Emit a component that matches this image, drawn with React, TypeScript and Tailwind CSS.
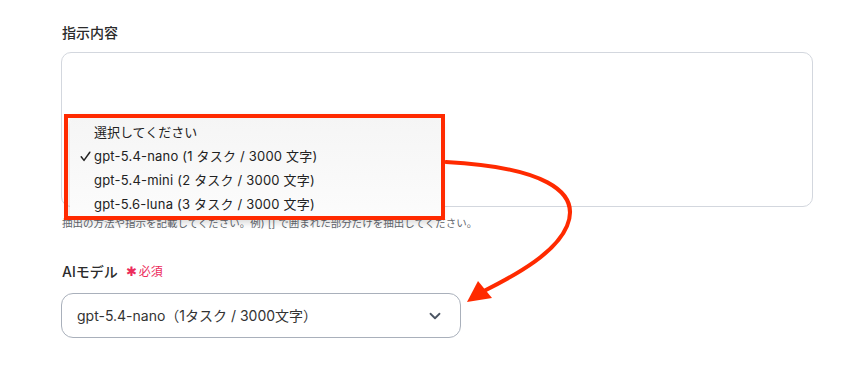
import { ChevronDown } from "lucide-react";

const models = [
  "gpt-5.4-nano (1 タスク / 3000 文字)",
  "gpt-5.4-mini (2 タスク / 3000 文字)",
  "gpt-5.6-luna (3 タスク / 3000 文字)",
];

function ModelMenu() {
  return (
    <div className="absolute left-[70px] top-[117px] w-[371px] h-[103px] rounded-[7px] bg-gradient-to-b from-[#f5f5f5] to-[#fcfcfc] shadow-[0_2px_8px_rgba(0,0,0,0.18)] pt-[3px] font-['Inter','Noto_Sans_CJK_JP',sans-serif] text-[13px] text-[#222]">
      <div className="h-[24px] leading-[24px] pl-[24px]">選択してください</div>
      {models.map((m, i) => (
        <div key={m} className="h-[24px] leading-[24px] pl-[24px] relative tracking-[0.2px]">
          {i === 0 && (
            <svg className="absolute left-[10px] top-[7px]" width="11" height="11" viewBox="0 0 11 11">
              <path d="M1.2 5.8 L4 9.4 L9.8 1.2" fill="none" stroke="#222" strokeWidth="1.5" strokeLinecap="round" strokeLinejoin="round" />
            </svg>
          )}
          {m}
        </div>
      ))}
    </div>
  );
}

function Arrow() {
  return (
    <svg className="absolute inset-0 pointer-events-none" width="848" height="369" viewBox="0 0 848 369">
      <path
        d="M446 162 C540 167 582 190 567 226 C556 252 520 273 482 292"
        fill="none"
        stroke="#ff2a00"
        strokeWidth="4"
        strokeLinecap="round"
      />
      <polygon points="467,302 478,281 492,298" fill="#ff2a00" />
    </svg>
  );
}

export default function App() {
  return (
    <div className="relative w-[848px] h-[369px] bg-white overflow-hidden font-['Inter','Noto_Sans_CJK_JP',sans-serif] text-[#2b2b2b]">
      <div className="flex flex-col pl-[61px] pr-[35px] pt-[23px]">
        <label className="text-[14px] leading-[20px] font-medium pl-[1px]">指示内容</label>
        <div className="mt-[9px] h-[155px] rounded-[10px] border border-[#d3d7de] bg-white" />
        <p className="mt-[9px] text-[10.5px] leading-[16px] text-[#63676e] pl-[1px]">
          抽出の方法や指示を記載してください。例) [] で囲まれた部分だけを抽出してください。
        </p>

        <div className="mt-[30px] flex items-center gap-[8px] pl-[1px] h-[20px]">
          <label className="text-[14px] leading-[20px] font-medium">AIモデル</label>
          <span className="text-[12px] text-[#ec2c5b] flex items-center gap-[2px]">
            <span className="text-[13px]">✱</span>必須
          </span>
        </div>
        <div className="mt-[11px] w-[400px] h-[45px] rounded-[12px] border border-[#a9b0bb] flex items-center justify-between pl-[15px] pr-[16px]">
          <span className="text-[14px] text-[#333]">gpt-5.4-nano（1タスク / 3000文字）</span>
          <ChevronDown size={18} strokeWidth={2.4} className="text-[#4b5563]" />
        </div>
      </div>

      {/* native select peeking behind the popup */}
      <div className="absolute left-[70px] top-[137px] w-[371px] h-[40px] border-r border-[#9ca3af]">
        <span className="absolute right-[-3px] top-[12px] w-[5px] h-[3px] bg-[#555]" />
      </div>
      <ModelMenu />
      <div className="absolute left-[64px] top-[114px] w-[381px] h-[106px] border-4 border-[#ff2a00] pointer-events-none" />
      <Arrow />
    </div>
  );
}
